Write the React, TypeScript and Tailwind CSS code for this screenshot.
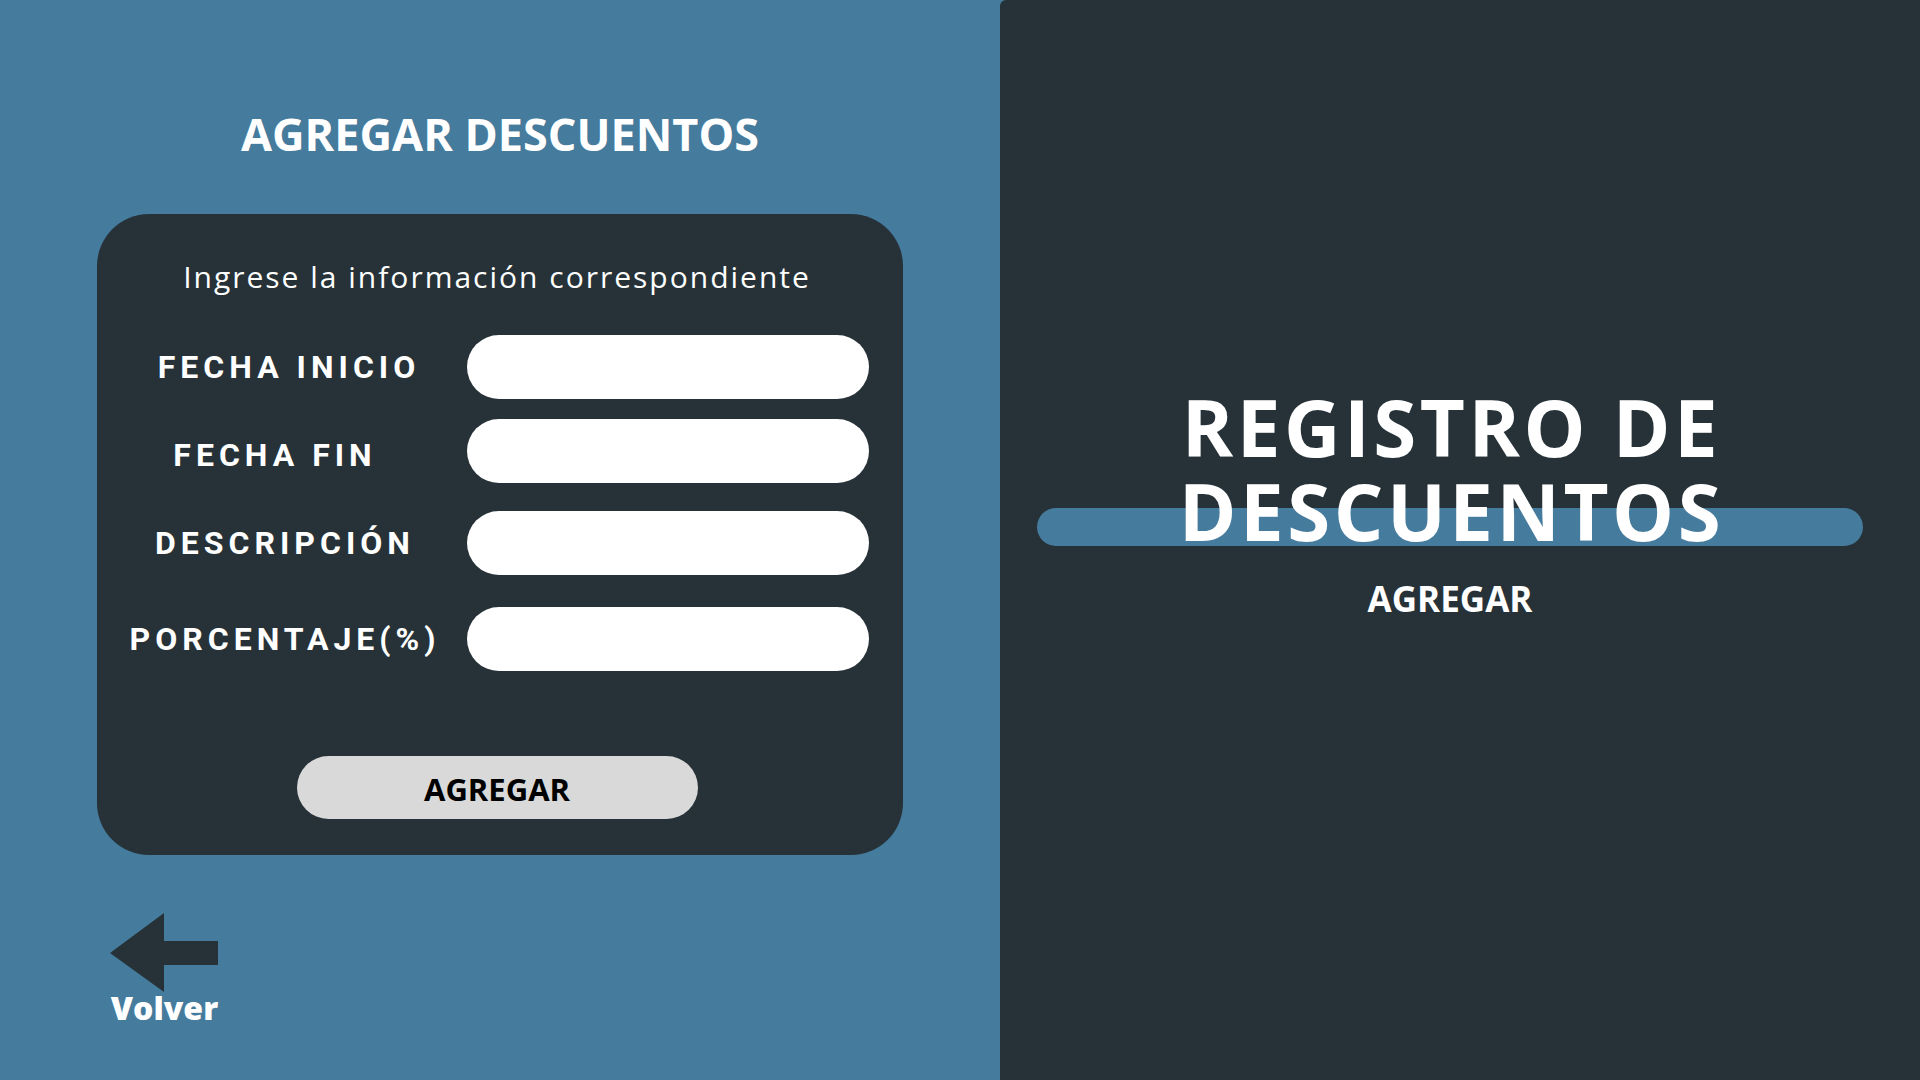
import React from "react";

const labelFont = { fontFamily: "Roboto, 'Liberation Sans', sans-serif" };

function Row({ label, mt, labelClass }: { label: string; mt: string; labelClass: string }) {
  return (
    <div className={`grid grid-cols-[370px_402px] items-center ${mt}`}>
      <div
        className={`text-center text-[32px] leading-none font-bold tracking-[5px] text-white ${labelClass}`}
        style={labelFont}
      >
        {label}
      </div>
      <input className="h-[64px] w-[402px] rounded-full bg-white outline-none border-0" />
    </div>
  );
}

export default function App() {
  return (
    <div
      className="flex w-[1920px] h-[1080px] overflow-hidden bg-[#457b9d]"
      style={{ fontFamily: "'Open Sans', 'Liberation Sans', sans-serif" }}
    >
      {/* Left panel */}
      <div className="flex w-[1000px] flex-col items-center bg-[#457b9d] pt-[111px]">
        <h1 className="text-[45px] leading-[45px] font-bold text-white">AGREGAR DESCUENTOS</h1>

        <div className="mt-[58px] flex h-[641px] w-[806px] flex-col rounded-[52px] bg-[#263238] pt-[48px]">
          <p className="pr-[6px] text-center text-[30px] leading-none font-normal tracking-[2px] text-white">
            Ingrese la información correspondiente
          </p>
          <div className="mt-[43px] flex flex-col">
            <Row label="FECHA INICIO" mt="mt-0" labelClass="pl-[14px]" />
            <Row label="FECHA FIN" mt="mt-[20px]" labelClass="pr-[14px] pt-[8px]" />
            <Row label="DESCRIPCIÓN" mt="mt-[28px]" labelClass="pl-[6px]" />
            <Row label="PORCENTAJE(%)" mt="mt-[32px]" labelClass="pl-[6px]" />
          </div>
          <div className="mt-[85px] flex justify-center pr-[6px]">
            <button className="flex h-[63px] w-[401px] items-center justify-center rounded-full bg-[#d9d9d9] pt-[3px] text-[31px] leading-none font-bold text-black">
              AGREGAR
            </button>
          </div>
        </div>

        <div className="mt-[58px] flex flex-col items-center self-start ml-[110px]">
          <svg width="109" height="79" viewBox="0 0 109 79" className="block">
            <polygon points="0,40 54,0 54,28 108,28 108,52 54,52 54,79" fill="#263238" />
          </svg>
          <span className="text-[32px] leading-none font-extrabold text-white">Volver</span>
        </div>
      </div>

      {/* Right panel */}
      <div className="flex w-[920px] flex-col items-center rounded-tl-[6px] bg-[#263238] pt-[385px] pr-[20px]">
        <div className="relative w-[826px]">
          <div className="absolute left-0 top-[123px] h-[38px] w-full rounded-full bg-[#457b9d]" />
          <h2 className="relative pl-[3px] text-center text-[78px] leading-[84px] font-bold tracking-[3.5px] text-white">
            REGISTRO DE
            <br />
            DESCUENTOS
          </h2>
        </div>
        <div className="mt-[28px] text-[35px] leading-none font-bold text-white">AGREGAR</div>
      </div>
    </div>
  );
}
